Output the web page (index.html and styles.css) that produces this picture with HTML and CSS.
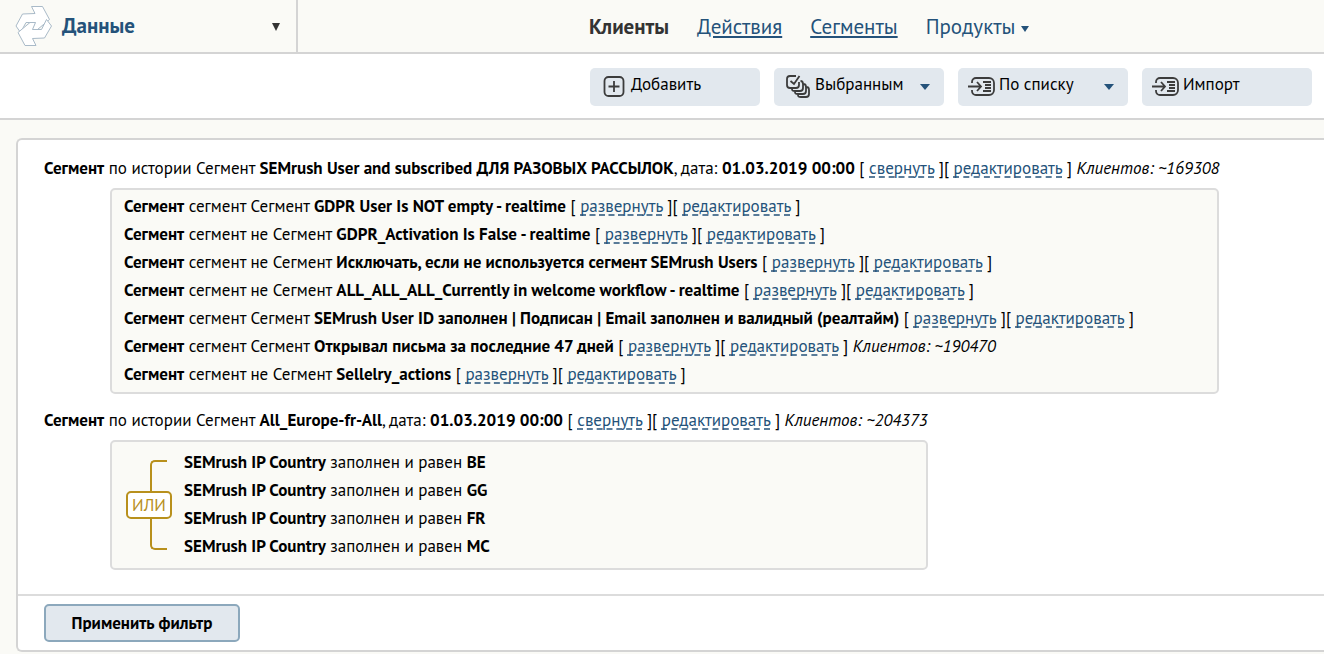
FILE: index.html
```html
<!DOCTYPE html>
<html lang="ru">
<head>
    <meta charset="utf-8">
    <title>Клиенты</title>
    <link rel="stylesheet" href="styles.css">
</head>
<body>
    <header class="header">
        <button type="button" class="section-switch">
            <svg class="logo" width="38" height="42" viewBox="0 0 38 42">
                <path d="M16.500 1.500h11l7 13-12 10H17l3-7h-9l-5.500 10L1 21 7.500 9 20 8.500z"/>
                <path d="M21 40.500H10l-7-13 12-10h5.500l-3 7h9l5-10 5 6.500-7 12-12 .5z"/>
            </svg>
            <span class="section-name">Данные</span>
            <svg class="section-arrow" width="8" height="8" viewBox="0 0 8 8"><path d="M0 0h8L4 8z"/></svg>
        </button>
        <nav class="nav">
            <b class="nav-current">Клиенты</b>
            <a href="#">Действия</a>
            <a href="#">Сегменты</a>
            <a href="#" class="nav-menu">Продукты <span class="caret"></span></a>
        </nav>
    </header>

    <div class="toolbar">
        <button type="button" class="tool tool-add">
            <svg width="22" height="22" viewBox="0 0 22 22"><rect x="1.500" y="1" width="19" height="19" rx="4"/><path d="M11 5v11M5.500 10.500h11"/></svg>
            <span>Добавить</span>
        </button>
        <button type="button" class="tool tool-selected">
            <svg width="24" height="24" viewBox="0 0 24 24"><path d="M10 1H4a3 3 0 0 0-3 3v6a3 3 0 0 0 3 3h6a3 3 0 0 0 3-3V7M4.500 6l3.500 3 5.500-8"/><path d="M14.500 6c2 0 2.500 1 2.500 3v4a3 3 0 0 1-3 3H9c-2 0-3 0-3-2M17.500 9c2 0 2.500 1 2.500 3v4a3 3 0 0 1-3 3h-5c-2 0-3 0-3-2M20.500 12c2 0 2.500 1 2.500 3v4a3 3 0 0 1-3 3h-5c-2 0-3 0-3-2"/></svg>
            <span>Выбранным</span>
            <span class="caret"></span>
        </button>
        <button type="button" class="tool tool-list">
            <svg width="27" height="20" viewBox="0 0 27 20"><path d="M4 6V5a4 4 0 0 1 4-4h13a5 5 0 0 1 5 5v7a5 5 0 0 1-5 5H8a4 4 0 0 1-4-4v-1M0 9.500h13M9 5l4 4.500L9 14M15 5h8M17 8h6M17 11h6M15 14h8"/></svg>
            <span>По списку</span>
            <span class="caret"></span>
        </button>
        <button type="button" class="tool tool-list">
            <svg width="27" height="20" viewBox="0 0 27 20"><path d="M4 6V5a4 4 0 0 1 4-4h13a5 5 0 0 1 5 5v7a5 5 0 0 1-5 5H8a4 4 0 0 1-4-4v-1M0 9.500h13M9 5l4 4.500L9 14M15 5h8M17 8h6M17 11h6M15 14h8"/></svg>
            <span>Импорт</span>
        </button>
    </div>

    <main class="filter">
        <div class="conditions">
            <section class="segment">
                <p><b>Сегмент</b> по истории Сегмент <b>SEMrush User and subscribed ДЛЯ РАЗОВЫХ РАССЫЛОК</b>, дата: <b>01.03.2019 00:00</b> [ <a href="#">свернуть</a> ][ <a href="#">редактировать</a> ] <i>Клиентов: ~169308</i></p>
                <div class="group">
                    <p><b>Сегмент</b> сегмент Сегмент <b>GDPR User Is NOT empty - realtime</b> [ <a href="#">развернуть</a> ][ <a href="#">редактировать</a> ]</p>
                    <p><b>Сегмент</b> сегмент не Сегмент <b>GDPR_Activation Is False - realtime</b> [ <a href="#">развернуть</a> ][ <a href="#">редактировать</a> ]</p>
                    <p><b>Сегмент</b> сегмент не Сегмент <b>Исключать, если не используется сегмент SEMrush Users</b> [ <a href="#">развернуть</a> ][ <a href="#">редактировать</a> ]</p>
                    <p><b>Сегмент</b> сегмент не Сегмент <b>ALL_ALL_ALL_Currently in welcome workflow - realtime</b> [ <a href="#">развернуть</a> ][ <a href="#">редактировать</a> ]</p>
                    <p><b>Сегмент</b> сегмент Сегмент <b>SEMrush User ID заполнен | Подписан | Email заполнен и валидный (реалтайм)</b> [ <a href="#">развернуть</a> ][ <a href="#">редактировать</a> ]</p>
                    <p><b>Сегмент</b> сегмент Сегмент <b>Открывал письма за последние 47 дней</b> [ <a href="#">развернуть</a> ][ <a href="#">редактировать</a> ] <i>Клиентов: ~190470</i></p>
                    <p><b>Сегмент</b> сегмент не Сегмент <b>Sellelry_actions</b> [ <a href="#">развернуть</a> ][ <a href="#">редактировать</a> ]</p>
                </div>
            </section>

            <section class="segment">
                <p><b>Сегмент</b> по истории Сегмент <b>All_Europe-fr-All</b>, дата: <b>01.03.2019 00:00</b> [ <a href="#">свернуть</a> ][ <a href="#">редактировать</a> ] <i>Клиентов: ~204373</i></p>
                <div class="group group-or">
                    <div class="or">
                        <span class="or-line or-top"></span>
                        <button type="button" class="or-label">ИЛИ</button>
                        <span class="or-line or-bottom"></span>
                    </div>
                    <div>
                        <p><b>SEMrush IP Country</b> заполнен и равен <b>BE</b></p>
                        <p><b>SEMrush IP Country</b> заполнен и равен <b>GG</b></p>
                        <p><b>SEMrush IP Country</b> заполнен и равен <b>FR</b></p>
                        <p><b>SEMrush IP Country</b> заполнен и равен <b>MC</b></p>
                    </div>
                </div>
            </section>
        </div>
        <div class="filter-footer">
            <button type="submit" class="apply">Применить фильтр</button>
        </div>
    </main>
</body>
</html>
```
FILE: styles.css
```css
* {
    box-sizing: border-box;
}
body {
    margin: 0;
    background-color: #fafaf6;
    color: #000;
    font-family: "PT Sans", "Noto Sans", sans-serif;
    font-size: 17px;
    line-height: 28px;
}
button {
    font: inherit;
    color: inherit;
    cursor: pointer;
}
p {
    margin: 0;
    white-space: nowrap;
}
.header {
    display: flex;
    height: 54px;
    border-bottom: 2px solid #d4d4d4;
}
.section-switch {
    display: flex;
    align-items: center;
    width: 298px;
    padding: 0 16px 0 15px;
    border: none;
    border-right: 2px solid #d4d4d4;
    background: none;
}
.logo {
    fill: #fff;
    stroke: #a9bac8;
}
.section-name {
    margin-left: 9px;
    color: #24527a;
    font-size: 21px;
    font-weight: bold;
}
.section-arrow {
    margin: 2px 0 0 auto;
    fill: #333;
}
.nav {
    flex: 1;
    display: flex;
    align-items: center;
    gap: 28px;
    padding: 2px 0 0 291px;
    font-size: 21px;
    white-space: nowrap;
}
.nav a {
    color: #24527a;
    text-decoration-thickness: 2px;
    text-underline-offset: 2px;
}
.nav .nav-menu {
    text-decoration: none;
}
.nav-current {
    color: #333;
}
.caret {
    display: inline-block;
    border: 5px solid transparent;
    border-top: 6px solid #24527a;
    border-bottom: none;
}
.nav .caret {
    border-width: 6px 4px 0;
    vertical-align: 2px;
}
.toolbar {
    display: flex;
    justify-content: flex-end;
    gap: 14px;
    padding: 14px 12px 12px;
    border-bottom: 2px solid #d4d4d4;
    background-color: #fff;
}
.tool {
    display: flex;
    align-items: center;
    gap: 6px;
    width: 170px;
    height: 38px;
    padding: 0 14px 6px 13px;
    border: none;
    border-radius: 5px;
    background-color: #e2e8ee;
    white-space: nowrap;
}
.tool-selected {
    gap: 5px;
    padding-left: 12px;
}
.tool-list {
    gap: 4px;
    padding-left: 10px;
}
.tool svg {
    flex: none;
    margin-top: 5px;
    fill: none;
    stroke: #3c3c3c;
    stroke-width: 1.8;
}
.tool .caret {
    margin: 6px 0 0 auto;
}
.filter {
    margin: 18px 0 0 16px;
    border: 2px solid #d4d4d4;
    border-right: none;
    border-radius: 6px 0 0 6px;
    background-color: #fff;
}
.conditions {
    padding: 14px 26px 12px;
}
.segment {
    width: fit-content;
    margin-bottom: 12px;
}
.segment a {
    color: #24527a;
    text-decoration: underline dashed;
    text-decoration-skip-ink: none;
    text-underline-offset: 3px;
}
.group {
    margin: 6px 0 0 66px;
    padding: 2px 12px 4px;
    border: 2px solid #dcdcdc;
    border-radius: 5px;
    background-color: #fafaf6;
}
.group-or {
    display: flex;
    gap: 12px;
    padding: 6px 14px 8px;
}
.or {
    display: flex;
    flex-direction: column;
    width: 46px;
    padding: 12px 0 10px;
}
.or-line {
    flex: 1;
    width: 17px;
    margin-left: 24px;
    border-left: 2px solid #b8901c;
}
.or-top {
    border-top: 2px solid #b8901c;
    border-top-left-radius: 5px;
}
.or-bottom {
    border-bottom: 2px solid #b8901c;
    border-bottom-left-radius: 5px;
}
.or-label {
    height: 28px;
    padding: 0;
    border: 2px solid #b8901c;
    border-radius: 5px;
    background-color: #fff;
    color: #b8901c;
    line-height: 22px;
}
.filter-footer {
    padding: 8px 26px;
    border-top: 2px solid #dcdcdc;
}
.apply {
    width: 196px;
    height: 38px;
    padding: 0;
    border: 2px solid #8ca8bc;
    border-radius: 5px;
    background-color: #e2e8ee;
    font-weight: bold;
}
```
